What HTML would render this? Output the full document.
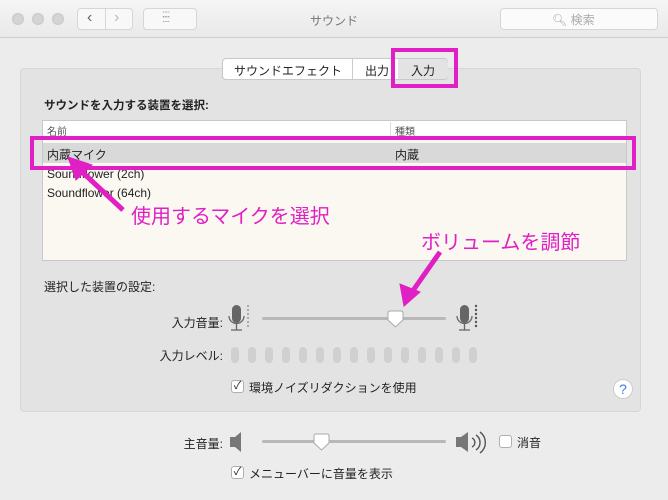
<!DOCTYPE html><html><head><meta charset="utf-8"><style>
*{margin:0;padding:0;box-sizing:border-box}
body{width:668px;height:500px;overflow:hidden;background:#ececec;font-family:"Liberation Sans","Noto Sans CJK JP",sans-serif;font-size:12px;color:#222;position:relative}
.a{position:absolute;white-space:nowrap}
.tb{left:0;top:0;width:668px;height:38px;background:linear-gradient(#f5f5f5,#e9e9e9);border-bottom:1px solid #d0d0d0}
.dot{width:12px;height:12px;border-radius:6px;background:#d4d4d4;border:1px solid #c8c8c8;top:13px}
.btn{background:#f8f8f8;border:1px solid #d6d6d6;border-radius:4px;height:22px;top:8px}
.panel{left:20px;top:68px;width:621px;height:344px;background:#e3e3e3;border:1px solid #d6d6d6;border-radius:4px}
.pk{border:4px solid #e01fc4}
.mg{color:#e01fc4;font-size:20px;white-space:nowrap}
.trk{height:3px;background:#b8b8b8;border-radius:2px}
.cb{width:13px;height:13px;background:#fff;border:1px solid #b0b0b0;border-radius:3px;font-size:11px;line-height:11px;text-align:center}
.pill{width:8px;height:16px;border-radius:4px;background:#d0d0d0;top:347px}
</style></head><body>
<div class="a tb"></div>
<div class="a dot" style="left:12px"></div><div class="a dot" style="left:32px"></div><div class="a dot" style="left:52px"></div>
<div class="a btn" style="left:77px;width:56px"></div>
<div class="a" style="left:105px;top:8px;width:1px;height:22px;background:#d6d6d6"></div>
<div class="a" style="left:87px;top:9px;font-size:16px;color:#666">&#x2039;</div>
<div class="a" style="left:114px;top:9px;font-size:16px;color:#bbb">&#x203A;</div>
<div class="a btn" style="left:143px;width:54px"></div>
<div class="a" style="left:162px;top:12px;font-size:10px;color:#999;letter-spacing:-1px;line-height:5px">::::<br>::::</div>
<div class="a" style="left:310px;top:12px;color:#777;font-size:12px">サウンド</div>
<div class="a btn" style="left:500px;width:158px;background:#fbfbfb"></div>
<div class="a" style="left:552px;top:11px;color:#aaa;font-size:12px">&#x1F50D;&#xFE0E; 検索</div>
<div class="a panel"></div>
<div class="a" style="left:222px;top:58px;width:226px;height:22px;background:#fff;border:1px solid #c8c8c8;border-radius:4px"></div>
<div class="a" style="left:398px;top:59px;width:50px;height:20px;background:#e3e3e3;border-radius:0 4px 4px 0"></div>
<div class="a" style="left:352px;top:59px;width:1px;height:20px;background:#ccc"></div>
<div class="a" style="left:234px;top:62px">サウンドエフェクト</div>
<div class="a" style="left:365px;top:62px">出力</div>
<div class="a" style="left:411px;top:62px">入力</div>
<div class="a pk" style="left:391px;top:48px;width:67px;height:40px"></div>
<div class="a" style="left:44px;top:97px;font-weight:bold;font-size:11.5px">サウンドを入力する装置を選択:</div>
<div class="a" style="left:42px;top:120px;width:585px;height:141px;background:#fbf8f2;border:1px solid #c8c8c8"></div>
<div class="a" style="left:43px;top:121px;width:583px;height:18px;background:#fff;border-bottom:1px solid #ddd"></div>
<div class="a" style="left:390px;top:122px;width:1px;height:16px;background:#ddd"></div>
<div class="a" style="left:47px;top:123px;font-size:10px;color:#555">名前</div>
<div class="a" style="left:395px;top:123px;font-size:10px;color:#555">種類</div>
<div class="a" style="left:43px;top:143px;width:583px;height:20px;background:#d9d9d9"></div>
<div class="a" style="left:47px;top:146px">内蔵マイク</div>
<div class="a" style="left:395px;top:146px">内蔵</div>
<div class="a" style="left:47px;top:167px">Soundflower (2ch)</div>
<div class="a" style="left:47px;top:186px">Soundflower (64ch)</div>
<div class="a pk" style="left:30px;top:136px;width:606px;height:34px"></div>
<div class="a mg" style="left:131px;top:200px">使用するマイクを選択</div>
<div class="a mg" style="left:421px;top:226px">ボリュームを調節</div>
<svg class="a" style="left:0;top:0" width="668" height="500"><g stroke="#e01fc4" stroke-width="5" fill="#e01fc4"><line x1="123" y1="210" x2="80" y2="170"/><polygon points="68,157 92,165 76,180" stroke-width="1"/><line x1="440" y1="252" x2="412" y2="292"/><polygon points="404,306 400,284 420,292" stroke-width="1"/></g></svg>
<div class="a" style="left:44px;top:278px">選択した装置の設定:</div>
<div class="a" style="left:130px;top:314px;width:93px;text-align:right">入力音量:</div>
<svg class="a" style="left:226px;top:303px" width="260" height="32"><g fill="#666"><rect x="6" y="2" width="9" height="18" rx="4.5"/><rect x="234" y="2" width="9" height="18" rx="4.5"/></g><g fill="none" stroke="#666" stroke-width="1.3"><path d="M3 13 a7.5 7.5 0 0 0 15 0M10.5 21v6M5 27h11"/><path d="M231 13 a7.5 7.5 0 0 0 15 0M238.5 21v6M233 27h11"/></g><g fill="#999"><circle cx="22" cy="3" r="1"/><circle cx="22" cy="7" r="1"/><circle cx="22" cy="11" r="1"/><circle cx="22" cy="15" r="1"/><circle cx="22" cy="19" r="1"/><circle cx="22" cy="23" r="1"/></g><g fill="#555"><circle cx="250" cy="3" r="1.2"/><circle cx="250" cy="7" r="1.2"/><circle cx="250" cy="11" r="1.2"/><circle cx="250" cy="15" r="1.2"/><circle cx="250" cy="19" r="1.2"/><circle cx="250" cy="23" r="1.2"/></g></svg>
<div class="a trk" style="left:262px;top:317px;width:184px"></div>
<svg class="a" style="left:386px;top:310px" width="20" height="22"><path d="M2 3 Q2 1 4 1 H15 Q17 1 17 3 V10 L9.5 17 L2 10Z" fill="#fff" stroke="#aaa"/></svg>
<div class="a" style="left:130px;top:347px;width:93px;text-align:right">入力レベル:</div>
<div class="a" style="left:231px;top:0"><div class="a pill" style="left:0"></div><div class="a pill" style="left:17px"></div><div class="a pill" style="left:34px"></div><div class="a pill" style="left:51px"></div><div class="a pill" style="left:68px"></div><div class="a pill" style="left:85px"></div><div class="a pill" style="left:102px"></div><div class="a pill" style="left:119px"></div><div class="a pill" style="left:136px"></div><div class="a pill" style="left:153px"></div><div class="a pill" style="left:170px"></div><div class="a pill" style="left:187px"></div><div class="a pill" style="left:204px"></div><div class="a pill" style="left:221px"></div><div class="a pill" style="left:238px"></div></div>
<div class="a cb" style="left:231px;top:380px">✓</div>
<div class="a" style="left:249px;top:379px">環境ノイズリダクションを使用</div>
<div class="a" style="left:613px;top:379px;width:20px;height:20px;border-radius:10px;background:#fff;border:1px solid #ccc;color:#3a7fe0;text-align:center;font-size:14px;line-height:18px">?</div>
<div class="a" style="left:130px;top:435px;width:93px;text-align:right">主音量:</div>
<svg class="a" style="left:228px;top:430px" width="265" height="26"><path d="M2 7h5l6-5v20l-6-5H2z" fill="#777"/><path d="M228 7h5l7-5v20l-7-5h-5z" fill="#777"/><g fill="none" stroke="#555" stroke-width="1.4"><path d="M244 8a5 5 0 0 1 0 9M248 5a9 9 0 0 1 0 15M252 2a13 13 0 0 1 0 21"/></g></svg>
<div class="a trk" style="left:262px;top:440px;width:184px"></div>
<svg class="a" style="left:312px;top:433px" width="20" height="22"><path d="M2 3 Q2 1 4 1 H15 Q17 1 17 3 V10 L9.5 17 L2 10Z" fill="#fff" stroke="#aaa"/></svg>
<div class="a cb" style="left:499px;top:435px"></div>
<div class="a" style="left:517px;top:434px">消音</div>
<div class="a cb" style="left:231px;top:466px">✓</div>
<div class="a" style="left:249px;top:465px">メニューバーに音量を表示</div>
</body></html>
